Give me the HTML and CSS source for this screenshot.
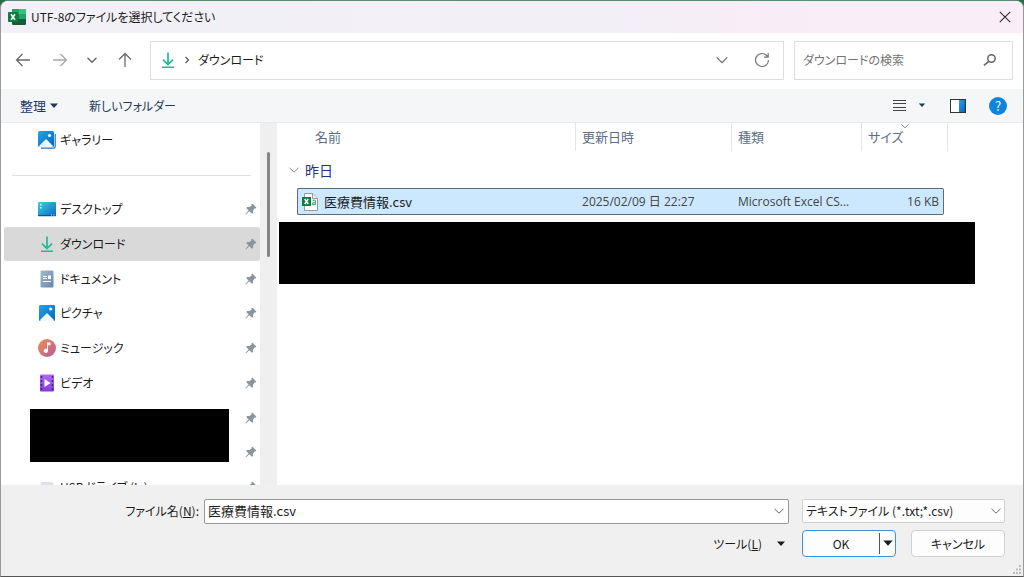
FILE: index.html
```html
<!DOCTYPE html>
<html lang="ja">
<head>
<meta charset="utf-8">
<title>UTF-8のファイルを選択してください</title>
<link rel="stylesheet" href="styles.css">
</head>
<body>
<svg class="defs" width="0" height="0" aria-hidden="true">
  <defs>
    <linearGradient id="g-blue" x1="0" y1="0" x2="1" y2="1"><stop offset="0" stop-color="#1fa5ea"/><stop offset="1" stop-color="#0a63c0"/></linearGradient>
    <linearGradient id="g-desk" x1="0" y1="0" x2="1" y2="1"><stop offset="0" stop-color="#35d3df"/><stop offset="1" stop-color="#1068bd"/></linearGradient>
    <linearGradient id="g-doc" x1="0" y1="0" x2="1" y2="1"><stop offset="0" stop-color="#a5bad0"/><stop offset="1" stop-color="#6886aa"/></linearGradient>
    <linearGradient id="g-music" x1="0" y1="0" x2="1" y2="1"><stop offset="0" stop-color="#f0904f"/><stop offset="1" stop-color="#b45a9e"/></linearGradient>
    <linearGradient id="g-video" x1="0" y1="0" x2="0" y2="1"><stop offset="0" stop-color="#b06bf0"/><stop offset="1" stop-color="#843cdb"/></linearGradient>
    <symbol id="i-download" viewBox="0 0 18 18"><path d="M9 1.5V13M4 8.7l5 4.8 5-4.8" fill="none" stroke="#25b892" stroke-width="1.7"/><path d="M3 16.3h12" stroke="#25b892" stroke-width="1.6"/></symbol>
    <symbol id="i-pin" viewBox="0 0 12 12"><path d="M7.2.6 11.4 4.5 10.5 5.6 9.6 5.6 8.1 7.6 8 9.9 7 10.7 4.4 8.3.9 11.5.4 11.1 3.6 7.5 1.2 5 2.1 4.1 4.4 4 6.5 2.4 6.4 1.5z" fill="#8b959d"/></symbol>
    <symbol id="i-chev" viewBox="0 0 12 12"><path d="M1.5 3.8 6 8.2l4.5-4.4" fill="none" stroke="currentColor"/></symbol>
    <symbol id="i-tri" viewBox="0 0 10 6"><path d="M1 .5h8L5 5z" fill="currentColor"/></symbol>
  </defs>
</svg>
<main class="dialog">
  <header class="titlebar">
    <svg class="app-icon" width="18" height="16" viewBox="0 0 18 16"><rect x="4" width="14" height="16" rx="1.2" fill="#185c37"/><path d="M5 0h6v5H4V1z" fill="#21a366"/><path d="M11 0h6q1 0 1 1v4h-7z" fill="#33c481"/><path d="M11 5h7v5h-7z" fill="#21a366"/><path d="M4 5h7v5H4z" fill="#107c41"/><rect y="3" width="10" height="10" rx="1" fill="#107c41"/><path d="m3 5.3 4 5.4M7 5.3l-4 5.4" stroke="#fff" stroke-width="1.5"/></svg>
    <h1>UTF-8のファイルを選択してください</h1>
    <button class="icon-btn close" aria-label="閉じる"><svg width="12" height="12" viewBox="0 0 12 12"><path d="m.8.8 10.4 10.4M11.2.8.8 11.2" stroke="#333" stroke-width="1.2"/></svg></button>
  </header>

  <nav class="navbar" aria-label="場所">
    <div class="history">
      <button class="icon-btn" aria-label="戻る"><svg width="16" height="14" viewBox="0 0 16 14"><path d="M7.5 1 1.5 7l6 6M1.5 7H15" fill="none" stroke="#6b6b6b" stroke-width="1.3"/></svg></button>
      <button class="icon-btn" aria-label="進む"><svg width="16" height="14" viewBox="0 0 16 14"><path d="m8.5 1 6 6-6 6M14.5 7H1" fill="none" stroke="#a9a9a9" stroke-width="1.3"/></svg></button>
      <button class="icon-btn narrow" aria-label="最近の場所"><svg width="12" height="12"><use href="#i-chev" stroke-width="1.4"/></svg></button>
      <button class="icon-btn" aria-label="上へ"><svg width="14" height="16" viewBox="0 0 14 16"><path d="m1 7.5 6-6 6 6M7 1.5V15" fill="none" stroke="#6b6b6b" stroke-width="1.3"/></svg></button>
    </div>
    <div class="address">
      <svg width="18" height="18"><use href="#i-download"/></svg>
      <svg class="crumb" width="6" height="8" viewBox="0 0 6 8"><path d="m1.5 1 3 3-3 3" fill="none" stroke="#555" stroke-width="1.2"/></svg>
      <button class="place">ダウンロード</button>
      <button class="icon-btn narrow push" aria-label="履歴"><svg width="14" height="14"><use href="#i-chev"/></svg></button>
      <button class="icon-btn" aria-label="更新"><svg width="16" height="16" viewBox="0 0 16 16"><path d="M14.5 8A6.5 6.5 0 1 1 12.7 3.5L14 4.8M14.2 1v4.2H10" fill="none" stroke="#777" stroke-width="1.2"/></svg></button>
    </div>
    <label class="search">
      <input type="search" placeholder="ダウンロードの検索" aria-label="ダウンロードの検索">
      <svg width="14" height="14" viewBox="0 0 14 14"><circle cx="8.5" cy="5.5" r="3.7" fill="none" stroke="#666" stroke-width="1.5"/><path d="m5.7 8.3-4.7 4" stroke="#666" stroke-width="1.7"/></svg>
    </label>
  </nav>

  <div class="toolbar">
    <button>整理<svg class="menu-tri" width="10" height="6"><use href="#i-tri"/></svg></button>
    <button>新しいフォルダー</button>
    <button class="push" aria-label="表示方法の変更"><svg width="13" height="13" viewBox="0 0 13 13"><path d="M0 1.5h13M0 4.5h13M0 8.5h13M0 11.5h13" stroke="#444"/></svg></button>
    <button class="view-menu" aria-label="その他のオプション"><svg width="8" height="5"><use href="#i-tri"/></svg></button>
    <button class="preview" aria-label="プレビュー ウィンドウ"><svg width="16" height="14" viewBox="0 0 16 14"><rect x=".5" y=".5" width="15" height="13" fill="#fff" stroke="#333"/><path d="M9 1h6v12H9z" fill="url(#g-blue)"/></svg></button>
    <button class="help" aria-label="ヘルプ">?</button>
  </div>

  <div class="content">
    <aside class="sidebar">
      <div class="item gallery"><svg width="18" height="18" viewBox="0 0 18 18"><path d="M3 17.2h12.5q1.7 0 1.7-1.7V3" fill="none" stroke="#1877c8" stroke-width="1.2"/><rect width="16" height="16" rx="1.5" fill="url(#g-blue)"/><path d="m1 15 7-7 7 7q0 1-1 1H2q-1 0-1-1z" fill="#edf8ff"/><circle cx="11.5" cy="4.5" r="1.6" fill="#fff"/></svg><span>ギャラリー</span></div>
      <hr>
      <ul class="folders">
        <li class="item"><svg width="18" height="18" viewBox="0 0 18 18"><rect y="2" width="18" height="14" rx="1" fill="url(#g-desk)"/><path d="M2 4h1.5v1.5H2zM2 7h1.5v1.5H2z" fill="#d9ffff"/><path d="M0 15h18v.5q0 .8-.8.8H.8q-.8 0-.8-.8z" fill="#0f5096"/><path d="M13 15h1m1.5 0h1" stroke="#aef"/></svg><span>デスクトップ</span><svg class="pin" width="12" height="12"><use href="#i-pin"/></svg></li>
        <li class="item selected"><svg width="18" height="18"><use href="#i-download"/></svg><span>ダウンロード</span><svg class="pin" width="12" height="12"><use href="#i-pin"/></svg></li>
        <li class="item"><svg width="18" height="18" viewBox="0 0 18 18"><rect x="2.5" y=".5" width="13" height="17" rx="1" fill="url(#g-doc)"/><path d="M5 6.5h4M5 8.5h4M5 11.5h8" stroke="#fff" stroke-width="1.2"/><path d="M10 5.5h3V9h-3z" fill="#fff"/></svg><span>ドキュメント</span><svg class="pin" width="12" height="12"><use href="#i-pin"/></svg></li>
      </ul>
      <ul class="folders media">
        <li class="item"><svg width="18" height="18" viewBox="0 0 18 18"><rect x="1" y="1" width="16" height="16" rx="1.2" fill="url(#g-blue)"/><path d="m2 16 7-7 7 7q0 1-1 1H3q-1 0-1-1z" fill="#edf8ff"/><circle cx="12.7" cy="5" r="1.6" fill="#fff"/></svg><span>ピクチャ</span><svg class="pin" width="12" height="12"><use href="#i-pin"/></svg></li>
        <li class="item"><svg width="18" height="18" viewBox="0 0 18 18"><circle cx="9" cy="9" r="9" fill="url(#g-music)"/><path d="M9 3.5h3.5v2.7H10v5.6a2.1 2.1 0 1 1-1-1.8z" fill="#fff"/></svg><span>ミュージック</span><svg class="pin" width="12" height="12"><use href="#i-pin"/></svg></li>
        <li class="item"><svg width="18" height="18" viewBox="0 0 18 18"><rect x="2" y=".5" width="14" height="17" rx="1" fill="url(#g-video)"/><path d="M3.500 2v14M14.500 2v14" stroke="#4d1c91" stroke-width="1.5" stroke-dasharray="2 2"/><path d="m6.500 5 6 4-6 4z" fill="#fff"/></svg><span>ビデオ</span><svg class="pin" width="12" height="12"><use href="#i-pin"/></svg></li>
      </ul>
      <div class="hidden-folders">
        <div class="mask"></div>
        <div class="pins"><svg class="pin" width="12" height="12"><use href="#i-pin"/></svg><svg class="pin" width="12" height="12"><use href="#i-pin"/></svg></div>
      </div>
      <div class="item"><svg width="18" height="18" viewBox="0 0 18 18"><rect x="2.5" y="4" width="13" height="10" rx="2" fill="#dfe2e8"/></svg><span>USB ドライブ (L:)</span><svg class="pin" width="12" height="12"><use href="#i-pin"/></svg></div>
    </aside>
    <div class="scroll"><div class="thumb"></div></div>

    <section class="files">
      <table>
        <colgroup><col class="c-lead"><col class="c-name"><col class="c-date"><col class="c-type"><col class="c-size"><col class="c-end"></colgroup>
        <thead>
          <tr><th class="name" colspan="2">名前</th><th>更新日時</th><th>種類</th><th class="size-head" colspan="2">サイズ<svg class="sort" width="10" height="10"><use href="#i-chev"/></svg></th></tr>
        </thead>
        <tbody>
          <tr class="group"><th colspan="6"><button><svg width="12" height="12"><use href="#i-chev"/></svg>昨日</button></th></tr>
          <tr class="file">
            <td class="lead"></td>
            <td class="cell name"><div><svg width="16" height="18" viewBox="0 0 16 18"><path d="M2.5.5h8.2l4.8 4.8v12.200h-13z" fill="#fff" stroke="#999"/><path d="M10.5.5v5h5" fill="#eee" stroke="#999"/><rect y="4" width="9" height="9" fill="#107c41"/><path d="m2.7 6 3.6 5M6.3 6l-3.6 5" stroke="#fff" stroke-width="1.4"/><path d="M10.5 7.500q3-1.200 3 1v3.200m0-2q-3.200-.2-3.200 1.200t3.200.2" fill="none" stroke="#42bd7d" stroke-width="1.2"/></svg>医療費情報.csv</div></td>
            <td class="cell meta">2025/02/09 日 22:27</td>
            <td class="cell meta">Microsoft Excel CS...</td>
            <td class="cell meta size">16 KB</td>
            <td></td>
          </tr>
        </tbody>
      </table>
      <div class="mask"></div>
    </section>
  </div>

  <footer class="footer">
    <label class="name-label" for="filename">ファイル名(<u>N</u>):</label>
    <div class="combo">
      <input id="filename" type="text" value="医療費情報.csv">
      <button class="icon-btn" aria-label="候補を表示"><svg width="12" height="12"><use href="#i-chev"/></svg></button>
    </div>
    <div class="filetype">
      <select aria-label="ファイルの種類"><option>テキストファイル (*.txt;*.csv)</option></select>
      <svg width="12" height="12"><use href="#i-chev"/></svg>
    </div>
    <button class="tools">ツール(<u>L</u>)<svg width="10" height="6"><use href="#i-tri"/></svg></button>
    <div class="actions">
      <div class="split"><button class="ok">OK</button><button class="more" aria-label="開くオプション"><svg width="12" height="7" viewBox="0 0 10 6"><use href="#i-tri"/></svg></button></div>
      <button class="cancel">キャンセル</button>
    </div>
    <svg class="grip" width="10" height="10" viewBox="0 0 10 10"><path d="M7 0h2v2H7zM4 3.5h2v2H4zM7 3.5h2v2H7zM1 7h2v2H1zM4 7h2v2H4zM7 7h2v2H7z" fill="#bbb"/></svg>
  </footer>
</main>
</body>
</html>
```
FILE: styles.css
```css
* { box-sizing: border-box; }

body {
  margin: 0;
  background: linear-gradient(#256c47 0 70px, #aaa 70px);
  font: 13px/18px "Noto Sans CJK JP", sans-serif;
  font-feature-settings: "palt";
  color: #1b1b1b;
}

button, input, select {
  font: inherit;
  font-feature-settings: inherit;
  color: inherit;
  border: 0;
  padding: 0;
  background: none;
  outline: none;
}

svg { display: block; flex: none; }
.defs { position: absolute; }
.push { margin-left: auto; }

.dialog {
  display: flex;
  flex-direction: column;
  height: 100vh;
  border: 1px solid #999;
  border-top-color: #5d8b72;
  border-bottom-color: #555;
  border-radius: 8px 8px 0 0;
  background: #fff;
  overflow: hidden;
}

.icon-btn {
  display: flex;
  align-items: center;
  justify-content: center;
  width: 32px;
  height: 28px;
  color: #666;
}
.icon-btn.narrow { width: 24px; }

/* Title bar */
.titlebar {
  display: flex;
  align-items: center;
  gap: 5px;
  height: 32px;
  flex: none;
  padding: 0 2px 0 7px;
  background: linear-gradient(90deg, #f2f1f7, #f3eff7 60%, #f9edf7 80%);
}
.titlebar h1 { margin: 0; font-size: 12px; font-weight: 400; }
.close { margin-left: auto; }

/* Navigation */
.navbar {
  display: flex;
  align-items: center;
  gap: 10px;
  flex: none;
  height: 56px;
  padding: 0 10px 2px 7px;
}
.history { display: flex; gap: 6px; width: 132px; }
.address, .search {
  display: flex;
  align-items: center;
  height: 39px;
  border: 1px solid #dedede;
}
.address { flex: 1; padding: 0 5px 0 8px; }
.crumb { margin: 0 8px 0 7px; }
.place { font-size: 12px; }
.address .icon-btn + .icon-btn { margin-left: 12px; }
.search { width: 219px; padding: 0 15px 0 8px; }
.search input { flex: 1; min-width: 0; font-size: 12px; }
.search input::placeholder { color: #737373; opacity: 1; }

/* Toolbar */
.toolbar {
  display: flex;
  align-items: center;
  flex: none;
  height: 34px;
  padding: 0 16px 0 19px;
  border-bottom: 1px solid #e8eaec;
  background: #f4f6f8;
  color: #1e395b;
}
.toolbar button { display: flex; align-items: center; }
.toolbar button:nth-child(2) { margin-left: 30px; font-size: 12px; }
.menu-tri { margin-left: 3px; }
.toolbar .view-menu { margin-left: 12px; }
.toolbar .preview { margin-left: 24px; }
.toolbar .help {
  justify-content: center;
  width: 18px;
  height: 18px;
  margin-left: 23px;
  border-radius: 50%;
  background: #0f84dc;
  color: #fff;
}

/* Folder tree */
.content { display: flex; flex: 1; min-height: 0; }
.sidebar { width: 259px; flex: none; overflow: hidden; }
.item {
  display: flex;
  align-items: center;
  gap: 4px;
  height: 34px;
  margin-left: 3px;
  padding: 0 3px 0 34px;
  border-radius: 2px;
  font-size: 12px;
}
.pin { margin-left: auto; }
.selected { background: #d9d9d9; }
.sidebar hr { margin: 18px 9px 16px 11px; border: 0; border-top: 1px solid #e0e0e0; }
.folders {
  display: flex;
  flex-direction: column;
  gap: 1px;
  margin: 0;
  padding: 0;
  list-style: none;
}
.mask { background: #000; }
.hidden-folders {
  display: flex;
  align-items: center;
  gap: 16px;
  height: 70px;
  padding: 0 3px 0 29px;
}
.hidden-folders .mask { flex: 1; height: 53px; }
.pins { display: flex; flex-direction: column; gap: 22px; }
.scroll { width: 17px; flex: none; padding: 29px 7px; background: #efefef; }
.thumb { width: 3px; height: 105px; border-radius: 2px; background: #868686; }

/* File list */
.files { flex: 1; min-width: 0; padding-left: 12px; overflow: hidden; }
table { width: 659px; table-layout: fixed; border-spacing: 0; }
.c-lead { width: 8px; }
.c-name { width: 279px; }
.c-date { width: 156px; }
.c-type { width: 130px; }
.c-size { width: 82px; }
.c-end { width: 4px; }
th, td { padding: 0 6px; text-align: left; font-weight: 400; white-space: nowrap; }
thead th {
  position: relative;
  height: 28px;
  border-right: 1px solid #e5e5e5;
  color: #5c6f88;
}
thead .name { padding-left: 26px; }
.sort { position: absolute; top: -2px; left: 50%; margin-left: -5px; color: #777; }
.group th { height: 37px; padding: 1px 0 0; }
.group button { display: flex; align-items: center; gap: 5px; color: #1e3287; font-size: 14px; }
.group svg { margin-left: -1px; color: #888; }
.file td { height: 27px; }
.file .cell { border: solid #5d6b78; border-width: 1px 0; background: #cce8ff; }
.file .name { padding: 0 4px; border-left-width: 1px; border-radius: 2px 0 0 2px; }
.file .size { padding: 0 4px; text-align: right; border-right-width: 1px; border-radius: 0 2px 2px 0; }
.name div { display: flex; align-items: center; gap: 6px; }
.meta { font-family: "Open Sans", "Noto Sans CJK JP", sans-serif; font-size: 12px; color: #444; }
.files .mask { width: 696px; max-width: 100%; height: 62px; margin: 7px 0 0 -10px; }

/* Footer */
.footer {
  position: relative;
  display: grid;
  grid-template-columns: 198px 1fr 203px;
  grid-template-rows: 24px 27px;
  gap: 7px 0;
  align-items: center;
  flex: none;
  padding: 14px 18px 19px 0;
  background: #f0f0f0;
}
.name-label { text-align: right; font-size: 12px; }
.combo {
  display: flex;
  align-items: center;
  height: 25px;
  margin: 0 13px 0 5px;
  border: 1px solid #999;
  border-radius: 2px;
  background: #fff;
}
.combo input { flex: 1; min-width: 0; padding-left: 3px; }
.combo .icon-btn { width: 18px; height: 22px; }
.filetype { position: relative; }
.filetype select {
  width: 100%;
  height: 24px;
  padding-left: 3px;
  border: 1px solid #d0d0d0;
  border-radius: 2px;
  background: #fdfdfd;
  font-size: 12px;
  appearance: none;
}
.filetype svg { position: absolute; top: 6px; right: 3px; color: #666; pointer-events: none; }
.tools {
  grid-column: 1 / 3;
  justify-self: end;
  display: flex;
  align-items: center;
  margin-right: 16px;
  font-size: 12px;
}
.tools svg { margin-left: 14px; }
.actions { display: flex; justify-content: space-between; }
.split, .cancel {
  width: 94px;
  height: 27px;
  border: 1px solid #d0d0d0;
  border-radius: 4px;
  background: #fdfdfd;
  font-size: 12px;
}
.split { display: flex; align-items: center; border-color: #3c94dc; }
.ok { flex: 1; }
.more { display: flex; align-items: center; justify-content: center; width: 16px; height: 21px; border-left: 1px solid #555; }
.grip { position: absolute; right: 1px; bottom: 1px; }
```
